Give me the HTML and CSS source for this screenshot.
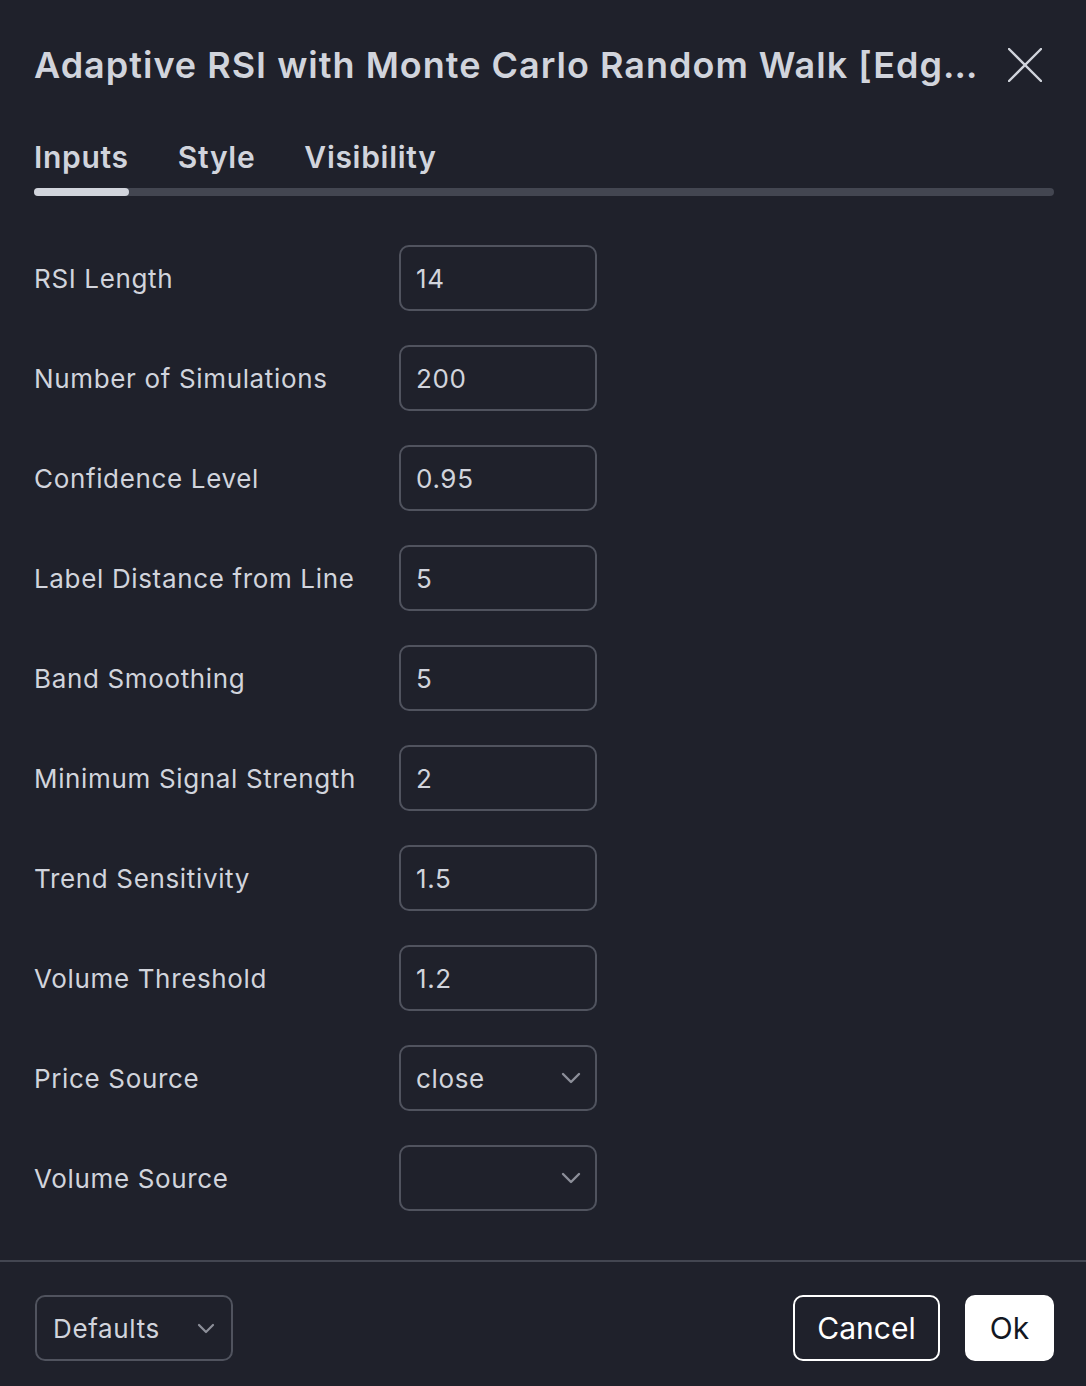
FILE: index.html
```html
<!DOCTYPE html>
<html>
<head>
<meta charset="utf-8">
<link rel="stylesheet" href="styles.css">
</head>
<body>
<div class="dialog">
  <div class="header">
    <div class="title">Adaptive RSI with Monte Carlo Random Walk [Edg…</div>
    <button class="close" aria-label="Close">
      <svg width="34" height="34" viewBox="0 0 34 34"><path d="M1 1 L33 33 M33 1 L1 33" stroke="#d1d4dc" stroke-width="2.4" stroke-linecap="round" fill="none"/></svg>
    </button>
  </div>
  <div class="tabs">
    <div class="tab-list">
      <span class="tab active">Inputs</span>
      <span class="tab">Style</span>
      <span class="tab">Visibility</span>
    </div>
    <div class="tab-track"><div class="tab-indicator"></div></div>
  </div>
  <div class="content">
    <div class="row"><span class="label">RSI Length</span><div class="field">14</div></div>
    <div class="row"><span class="label">Number of Simulations</span><div class="field">200</div></div>
    <div class="row"><span class="label">Confidence Level</span><div class="field">0.95</div></div>
    <div class="row"><span class="label">Label Distance from Line</span><div class="field">5</div></div>
    <div class="row"><span class="label">Band Smoothing</span><div class="field">5</div></div>
    <div class="row"><span class="label">Minimum Signal Strength</span><div class="field">2</div></div>
    <div class="row"><span class="label">Trend Sensitivity</span><div class="field">1.5</div></div>
    <div class="row"><span class="label">Volume Threshold</span><div class="field">1.2</div></div>
    <div class="row"><span class="label">Price Source</span><div class="field select"><span>close</span><svg class="chev" width="20" height="12" viewBox="0 0 20 12"><path d="M2 2 L10 10 L18 2" stroke="#8c8f99" stroke-width="2.4" fill="none" stroke-linecap="round" stroke-linejoin="round"/></svg></div></div>
    <div class="row"><span class="label">Volume Source</span><div class="field select"><span></span><svg class="chev" width="20" height="12" viewBox="0 0 20 12"><path d="M2 2 L10 10 L18 2" stroke="#8c8f99" stroke-width="2.4" fill="none" stroke-linecap="round" stroke-linejoin="round"/></svg></div></div>
  </div>
  <div class="footer">
    <div class="defaults"><span>Defaults</span><svg width="18" height="11" viewBox="0 0 18 11"><path d="M2 2 L9 9 L16 2" stroke="#8c8f99" stroke-width="2.2" fill="none" stroke-linecap="round" stroke-linejoin="round"/></svg></div>
    <div class="actions">
      <button class="btn cancel">Cancel</button>
      <button class="btn ok">Ok</button>
    </div>
  </div>
</div>
</body>
</html>
```
FILE: styles.css
```css
* { box-sizing: border-box; }
html, body {
  margin: 0;
  padding: 0;
  background: #1f212b;
}
body {
  font-family: Inter, "Noto Sans", sans-serif;
  color: #d1d4dc;
}
.dialog {
  width: 1086px;
  height: 1386px;
  display: flex;
  flex-direction: column;
  background: #1f212b;
}
.header {
  display: flex;
  align-items: center;
  justify-content: space-between;
  padding: 40px 44px 0 34px;
  height: 90px;
}
.title {
  font-size: 36px;
  font-weight: 600;
  letter-spacing: 1px;
  white-space: nowrap;
  color: #d1d4dc;
}
.close {
  background: none;
  border: none;
  padding: 0;
  width: 34px;
  height: 34px;
  display: flex;
}
.tabs {
  padding: 36px 32px 0 34px;
}
.tab-list {
  display: flex;
  gap: 49px;
  height: 62px;
  align-items: center;
}
.tab {
  font-size: 30px;
  font-weight: 600;
  color: #d1d4dc;
  letter-spacing: 0.7px;
}
.tab-track {
  height: 8px;
  border-radius: 4px;
  background: #434651;
}
.tab-indicator {
  width: 95px;
  height: 8px;
  border-radius: 4px;
  background: #d1d4dc;
}
.content {
  padding: 49px 0 0 34px;
  display: flex;
  flex-direction: column;
  gap: 34px;
  flex: 1;
}
.row {
  display: flex;
  align-items: center;
  height: 66px;
}
.label {
  width: 365px;
  font-size: 26px;
  letter-spacing: 0.65px;
  color: #d1d4dc;
}
.field {
  width: 198px;
  height: 66px;
  border: 2px solid #50535e;
  border-radius: 10px;
  display: flex;
  align-items: center;
  justify-content: space-between;
  padding: 0 15px 0 15px;
  font-size: 26px;
  letter-spacing: 0.65px;
  color: #d1d4dc;
}
.select {
  padding-right: 14px;
}
.footer {
  border-top: 2px solid #434651;
  height: 126px;
  display: flex;
  align-items: flex-start;
  justify-content: space-between;
  padding: 33px 32px 0 35px;
}
.defaults {
  width: 198px;
  height: 66px;
  border: 2px solid #50535e;
  border-radius: 10px;
  display: flex;
  align-items: center;
  justify-content: space-between;
  padding: 0 16px 0 16px;
  font-size: 26px;
  letter-spacing: 0.65px;
  color: #d1d4dc;
}
.actions {
  display: flex;
  gap: 25px;
}
.btn {
  height: 66px;
  border-radius: 10px;
  font-family: Inter, "Noto Sans", sans-serif;
  font-size: 30px;
  padding: 0;
}
.cancel {
  width: 147px;
  background: transparent;
  border: 2px solid #ffffff;
  color: #ffffff;
}
.ok {
  width: 89px;
  background: #ffffff;
  border: 2px solid #ffffff;
  color: #131722;
}
```
